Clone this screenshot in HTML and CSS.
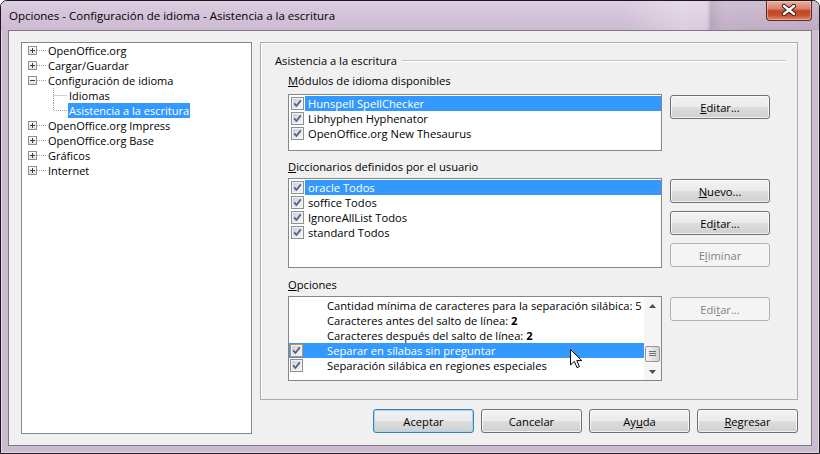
FILE: index.html
```html
<!DOCTYPE html>
<html lang="es">
<head>
  <meta charset="UTF-8" />
  <title>Opciones - Configuración de idioma - Asistencia a la escritura</title>
  <link rel="stylesheet" href="styles.css">
</head>
<body>
  <svg class="defs" xmlns="http://www.w3.org/2000/svg">
    <defs>
      <linearGradient id="cbfill" x1="0" y1="0" x2="1" y2="1">
        <stop offset="0" stop-color="#cbcfd5"/>
        <stop offset="1" stop-color="#f6f6f6"/>
      </linearGradient>
      <linearGradient id="boxfill" x1="0" y1="0" x2="0" y2="1">
        <stop offset="0" stop-color="#ffffff"/>
        <stop offset="1" stop-color="#dedede"/>
      </linearGradient>
      <symbol id="cb" viewBox="0 0 13 13">
        <rect x="0.5" y="0.5" width="12" height="12" fill="#f4f4f4" stroke="#8e8f8f"/>
        <rect x="2" y="2" width="9" height="9" fill="url(#cbfill)"/>
        <path d="M3.2 6.4 L5.4 9 L9.8 3.4" fill="none" stroke="#4c5f8e" stroke-width="1.7"/>
      </symbol>
      <symbol id="cbh" viewBox="0 0 13 13">
        <rect x="0.5" y="0.5" width="12" height="12" fill="#f4f4f4" stroke="#c98d4a"/>
        <rect x="2" y="2" width="9" height="9" fill="url(#cbfill)"/>
        <path d="M3.2 6.4 L5.4 9 L9.8 3.4" fill="none" stroke="#4c5f8e" stroke-width="1.7"/>
      </symbol>
      <symbol id="plus" viewBox="0 0 26 15">
        <rect x="6.5" y="3.5" width="8" height="8" fill="url(#boxfill)" stroke="#8f8f8f"/>
        <path d="M8 7.5 H13 M10.5 5 V10" stroke="#3c3c3c"/>
        <path d="M15 7.5 H25" stroke="#a0a0a0" stroke-dasharray="1 1"/>
      </symbol>
      <symbol id="minus" viewBox="0 0 26 15">
        <rect x="6.5" y="3.5" width="8" height="8" fill="url(#boxfill)" stroke="#8f8f8f"/>
        <path d="M8 7.5 H13" stroke="#3c3c3c"/>
        <path d="M15 7.5 H25" stroke="#a0a0a0" stroke-dasharray="1 1"/>
      </symbol>
    </defs>
  </svg>

  <div class="window">
    <div class="titlebar">
      <span class="title">Opciones - Configuración de idioma - Asistencia a la escritura</span>
      <div class="close">
        <svg width="44" height="19" viewBox="0 0 44 19">
          <path d="M17 5 L27 13 M27 5 L17 13" stroke="#3b1712" stroke-width="4.4" stroke-linecap="round"/>
          <path d="M17 5 L27 13 M27 5 L17 13" stroke="#ffffff" stroke-width="2.4" stroke-linecap="round"/>
        </svg>
      </div>
    </div>

    <div class="client">
      <div class="tree">
        <div class="node"><svg class="twist"><use href="#plus"/></svg><span>OpenOffice.org</span></div>
        <div class="node"><svg class="twist"><use href="#plus"/></svg><span>Cargar/Guardar</span></div>
        <div class="node"><svg class="twist"><use href="#minus"/></svg><span>Configuración de idioma</span></div>
        <div class="node">
          <svg class="branch" viewBox="0 0 46 15"><path d="M31.5 0 V15 M31.5 7.5 H45" stroke="#a0a0a0" stroke-dasharray="1 1"/></svg>
          <span class="leaf">Idiomas</span>
        </div>
        <div class="node">
          <svg class="branch" viewBox="0 0 46 15"><path d="M31.5 0 V7.5 H45" fill="none" stroke="#a0a0a0" stroke-dasharray="1 1"/></svg>
          <span class="leaf sel">Asistencia a la escritura</span>
        </div>
        <div class="node"><svg class="twist"><use href="#plus"/></svg><span>OpenOffice.org Impress</span></div>
        <div class="node"><svg class="twist"><use href="#plus"/></svg><span>OpenOffice.org Base</span></div>
        <div class="node"><svg class="twist"><use href="#plus"/></svg><span>Gráficos</span></div>
        <div class="node"><svg class="twist"><use href="#plus"/></svg><span>Internet</span></div>
      </div>

      <div class="main">
        <div class="page">
          <div class="heading"><span>Asistencia a la escritura</span><div class="rule"></div></div>

          <div class="content">
            <div class="label label-first"><u>M</u>ódulos de idioma disponibles</div>
            <div class="section section-modules">
              <div class="list list-modules">
                <div class="row"><svg class="cb"><use href="#cb"/></svg><span class="txt sel">Hunspell SpellChecker</span></div>
                <div class="row"><svg class="cb"><use href="#cb"/></svg><span class="txt">Libhyphen Hyphenator</span></div>
                <div class="row"><svg class="cb"><use href="#cb"/></svg><span class="txt">OpenOffice.org New Thesaurus</span></div>
              </div>
              <div class="btns">
                <button class="btn"><u>E</u>ditar...</button>
              </div>
            </div>

            <div class="label label-dicts"><u>D</u>iccionarios definidos por el usuario</div>
            <div class="section section-dicts">
              <div class="list list-dicts">
                <div class="row"><svg class="cb"><use href="#cb"/></svg><span class="txt sel">oracle Todos</span></div>
                <div class="row"><svg class="cb"><use href="#cb"/></svg><span class="txt">soffice Todos</span></div>
                <div class="row"><svg class="cb"><use href="#cb"/></svg><span class="txt">IgnoreAllList Todos</span></div>
                <div class="row"><svg class="cb"><use href="#cb"/></svg><span class="txt">standard Todos</span></div>
              </div>
              <div class="btns">
                <button class="btn"><u>N</u>uevo...</button>
                <button class="btn">Ed<u>i</u>tar...</button>
                <button class="btn" disabled>E<u>l</u>iminar</button>
              </div>
            </div>

            <div class="label label-opts"><u>O</u>pciones</div>
            <div class="section section-opts">
              <div class="list list-opts">
                <div class="opts">
                  <div class="opt"><span class="nocb"></span><span class="otxt">Cantidad mínima de caracteres para la separación silábica: 5</span></div>
                  <div class="opt"><span class="nocb"></span><span class="otxt">Caracteres antes del salto de línea: <b>2</b></span></div>
                  <div class="opt"><span class="nocb"></span><span class="otxt">Caracteres después del salto de línea: <b>2</b></span></div>
                  <div class="opt sel"><svg class="cb"><use href="#cbh"/></svg><span class="otxt">Separar en sílabas sin preguntar</span></div>
                  <div class="opt"><svg class="cb"><use href="#cb"/></svg><span class="otxt">Separación silábica en regiones especiales</span></div>
                </div>
                <div class="scrollbar">
                  <div class="arrow"><svg width="7" height="4" viewBox="0 0 7 4"><path d="M0 4 L3.5 0 L7 4 Z" fill="#4d4d4d"/></svg></div>
                  <div class="thumb">
                    <svg width="7" height="6" viewBox="0 0 7 6"><path d="M0 0.5 H7 M0 2.5 H7 M0 4.5 H7" stroke="#6f6f6f"/></svg>
                  </div>
                  <div class="arrow arrow-down"><svg width="7" height="4" viewBox="0 0 7 4"><path d="M0 0 L3.5 4 L7 0 Z" fill="#4d4d4d"/></svg></div>
                </div>
              </div>
              <div class="btns">
                <button class="btn" disabled>Edi<u>t</u>ar...</button>
              </div>
            </div>
          </div>
        </div>

        <div class="footer">
          <button class="btn btn-wide btn-default">Aceptar</button>
          <button class="btn btn-wide">Cancelar</button>
          <button class="btn btn-wide">Ay<u>u</u>da</button>
          <button class="btn btn-wide"><u>R</u>egresar</button>
        </div>
      </div>
    </div>

    <svg class="cursor" width="13" height="20" viewBox="0 0 13 20">
      <path d="M0.5 0.5 V16 L4.3 12.4 L7 18.6 L9.4 17.6 L6.8 11.6 H11.8 Z" fill="#fff" stroke="#000" stroke-linejoin="round"/>
    </svg>
  </div>
</body>
</html>
```

FILE: styles.css
```css
* {
  box-sizing: border-box;
}
body {
  margin: 0;
  font-family: "Open Sans", "Noto Sans", sans-serif;
  font-size: 11.2px;
  color: #000;
}
.defs {
  position: absolute;
  width: 0;
  height: 0;
}

/* window frame */
.window {
  position: relative;
  width: 820px;
  height: 454px;
  border: 1px solid #1d1a1f;
  border-radius: 7px 7px 0 0;
  background: #cdbbd1;
  box-shadow: inset 0 0 0 1px rgba(255, 255, 255, 0.45);
  overflow: hidden;
}
.titlebar {
  display: flex;
  align-items: flex-start;
  height: 29px;
  background:
    linear-gradient(to right, transparent 620px, rgba(255, 255, 255, 0.28) 680px, rgba(255, 255, 255, 0.22) 706px, rgba(60, 40, 60, 0.16) 710px, rgba(60, 40, 60, 0.08) 722px, rgba(60, 40, 60, 0.1) 100%),
    linear-gradient(#dccde0, #d3c1d7 60%, #cdbad1);
}
.title {
  padding: 7px 0 0 8px;
  line-height: 15px;
  font-size: 11.5px;
}
.close {
  margin-left: auto;
  margin-right: 7px;
  width: 46px;
  height: 20px;
  border: 1px solid #5b2a24;
  border-top: none;
  border-radius: 0 0 4px 4px;
  background: linear-gradient(#eab0a0 0%, #d9826e 40%, #c2452a 52%, #c8512f 75%, #e08a64 100%);
  box-shadow: inset 0 0 0 1px rgba(255, 220, 200, 0.45);
}
.close svg {
  display: block;
}

/* client area */
.client {
  display: flex;
  gap: 8px;
  margin-left: 7px;
  width: 804px;
  height: 416px;
  padding: 11px 13px 0 12px;
  border: 1px solid #7c7880;
  background: #f0f0f0;
}

/* navigation tree */
.tree {
  width: 231px;
  height: 392px;
  border: 1px solid #828790;
  background: #fff;
  font-size: 11px;
}
.node {
  display: flex;
  align-items: center;
  height: 15px;
  line-height: 15px;
  white-space: nowrap;
}
.twist {
  flex: none;
  width: 26px;
  height: 15px;
}
.branch {
  flex: none;
  width: 46px;
  height: 15px;
}
.leaf {
  padding: 0 1px;
}
.sel {
  background: #3399ff;
  color: #fff;
}

/* option page */
.main {
  display: flex;
  flex-direction: column;
  width: 538px;
}
.page {
  height: 358px;
  padding: 10px 0 0 14px;
  border: 1px solid #acacac;
  box-shadow: inset 1px 1px 0 #fff;
}
.heading {
  display: flex;
  align-items: center;
  height: 15px;
  line-height: 15px;
  margin-right: 11px;
}
.rule {
  flex: 1;
  height: 2px;
  margin-left: 5px;
  border-top: 1px solid #c2c2c2;
  border-bottom: 1px solid #fff;
}
.content {
  margin-left: 13px;
}
.label {
  height: 15px;
  line-height: 15px;
}
.label-first {
  margin-top: 5px;
}
.label-dicts {
  margin-top: 8px;
}
.label-opts {
  margin-top: 9px;
}
.section {
  display: flex;
  gap: 8px;
}
.section-modules {
  margin-top: 6px;
}
.section-dicts {
  margin-top: 4px;
}
.section-opts {
  margin-top: 4px;
}

/* list boxes */
.list {
  width: 374px;
  padding-top: 1px;
  border: 1px solid #828790;
  background: #fff;
  overflow: hidden;
}
.list-modules {
  height: 57px;
}
.list-dicts {
  height: 90px;
}
.list-opts {
  display: flex;
  height: 85px;
  padding-top: 0;
}
.row {
  display: flex;
  align-items: center;
  height: 15px;
  white-space: nowrap;
}
.cb {
  flex: none;
  width: 13px;
  height: 13px;
  margin-left: 2px;
}
.txt {
  flex: 1;
  height: 15px;
  line-height: 15px;
  margin-left: 1px;
  padding-left: 3px;
}
.opts {
  flex: 1;
  padding-top: 1px;
  overflow: hidden;
}
.opt {
  display: flex;
  align-items: center;
  height: 15px;
  line-height: 15px;
  white-space: nowrap;
  overflow: hidden;
}
.opt .cb {
  margin-left: 1px;
}
.nocb {
  flex: none;
  width: 13px;
  margin-left: 1px;
}
.otxt {
  margin-left: 24px;
}
.scrollbar {
  display: flex;
  flex-direction: column;
  align-items: center;
  width: 17px;
  background: #f5f5f5;
}
.arrow {
  display: flex;
  align-items: center;
  justify-content: center;
  width: 17px;
  height: 17px;
}
.arrow svg {
  display: block;
}
.arrow-down {
  margin-top: auto;
}
.thumb {
  display: flex;
  align-items: center;
  justify-content: center;
  width: 15px;
  height: 16px;
  margin-top: 32px;
  border: 1px solid #979797;
  border-radius: 2px;
  background: linear-gradient(to right, #f4f4f4, #e2e2e2 50%, #d3d3d3);
}
.thumb svg {
  display: block;
}

/* buttons */
.btns {
  display: flex;
  flex-direction: column;
  gap: 8px;
  padding-top: 1px;
}
.btn {
  width: 100px;
  height: 24px;
  padding: 0;
  border: 1px solid #707070;
  border-radius: 3px;
  background: linear-gradient(#f2f2f2 0%, #ebebeb 48%, #dddddd 52%, #cfcfcf 100%);
  box-shadow: inset 0 0 0 1px rgba(255, 255, 255, 0.7);
  font: inherit;
  color: #000;
}
.btn:disabled {
  border-color: #adb2b5;
  background: #f4f4f4;
  box-shadow: none;
  color: #838383;
}
.btn-wide {
  width: 101px;
}
.btn-default {
  border-color: #3c7fb1;
  box-shadow: inset 0 0 0 1px #a6d8f4;
}
.footer {
  display: flex;
  justify-content: flex-end;
  gap: 7px;
  margin-top: 9px;
}

/* mouse pointer over the list */
.cursor {
  position: absolute;
  left: 569px;
  top: 348px;
}
```
